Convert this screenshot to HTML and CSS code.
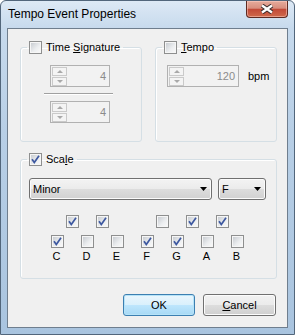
FILE: index.html
```html
<!DOCTYPE html>
<html lang="en">
<head>
    <meta charset="UTF-8">
    <meta name="viewport" content="width=device-width, initial-scale=1.0">
    <title>Tempo Event Properties</title>
    <link rel="stylesheet" href="styles.css">
</head>
<body>

<div class="window">
    <div class="titlebar">
        <span class="title">Tempo Event Properties</span>
        <span class="close">
            <svg width="14" height="10" viewBox="0 0 14 10">
                <path d="M2 1.5 L12 8.5 M12 1.5 L2 8.5" stroke="#3b2c2c" stroke-width="4.4" fill="none"/>
                <path d="M2 1.5 L12 8.5 M12 1.5 L2 8.5" stroke="#ffffff" stroke-width="2.4" fill="none"/>
            </svg>
        </span>
    </div>

    <div class="client">
        <div class="top-groups">
            <!-- Time signature -->
            <fieldset class="group">
                <legend><span class="chk"></span><span>Time <u>S</u>ignature</span></legend>
                <div class="sig">
                    <div class="spin">
                        <div class="spin-btns"><span class="up"></span><span class="down"></span></div>
                        <span class="spin-val">4</span>
                    </div>
                    <div class="divider"></div>
                    <div class="spin">
                        <div class="spin-btns"><span class="up"></span><span class="down"></span></div>
                        <span class="spin-val">4</span>
                    </div>
                </div>
            </fieldset>

            <!-- Tempo -->
            <fieldset class="group">
                <legend><span class="chk"></span><span><u>T</u>empo</span></legend>
                <div class="tempo">
                    <div class="spin spin-wide">
                        <div class="spin-btns"><span class="up"></span><span class="down"></span></div>
                        <span class="spin-val">120</span>
                    </div>
                    <span>bpm</span>
                </div>
            </fieldset>
        </div>

        <!-- Scale -->
        <fieldset class="group group-scale">
            <legend><span class="chk on"><svg width="9" height="9" viewBox="0 0 9 9"><path d="M1 4.3 L3.3 7.6 L8 0.8" stroke="#3d58a0" stroke-width="1.7" fill="none"/></svg></span><span>Sca<u>l</u>e</span></legend>
            <div class="scale-body">
                <div class="combos">
                    <div class="combo combo-mode"><span>Minor</span><svg width="7" height="4" viewBox="0 0 7 4"><path d="M0 0h7L3.5 4z" fill="#000"/></svg></div>
                    <div class="combo combo-key"><span>F</span><svg width="7" height="4" viewBox="0 0 7 4"><path d="M0 0h7L3.5 4z" fill="#000"/></svg></div>
                </div>
                <div class="keys">
                    <div class="key-row black-row" id="blackRow"></div>
                    <div class="key-row" id="whiteRow"></div>
                    <div class="key-row labels">
                        <span>C</span><span>D</span><span>E</span><span>F</span><span>G</span><span>A</span><span>B</span>
                    </div>
                </div>
            </div>
        </fieldset>

        <div class="buttons">
            <button class="btn btn-default">OK</button>
            <button class="btn"><u>C</u>ancel</button>
        </div>
    </div>
</div>

<script>
    // null = no black key between those white keys
    const blackKeys = [true, true, null, false, true, true, null];
    const whiteKeys = [true, false, false, true, true, false, false];
    const tick = '<svg width="9" height="9" viewBox="0 0 9 9"><path d="M1 4.3 L3.3 7.6 L8 0.8" stroke="#3d58a0" stroke-width="1.7" fill="none"/></svg>';

    function renderRow(id, keys) {
        const row = document.getElementById(id);
        keys.forEach(k => {
            const cell = document.createElement('span');
            cell.classList.add('cell');
            if (k !== null) {
                cell.innerHTML = `<span class="chk${k ? ' on' : ''}">${k ? tick : ''}</span>`;
            }
            row.appendChild(cell);
        });
    }

    renderRow('blackRow', blackKeys);
    renderRow('whiteRow', whiteKeys);
</script>

</body>
</html>
```

FILE: styles.css
```css
body {
    margin: 0;
    background: #ffffff;
    font-family: 'Liberation Sans', Arial, sans-serif;
    font-size: 11px;
    color: #000000;
}
.window {
    width: 295px;
    height: 335px;
    box-sizing: border-box;
    border: 1px solid #52667b;
    border-radius: 6px 6px 0 0;
    background: linear-gradient(180deg, #dde9f5 0, #c7daed 27px, #b8cfe6 130px, #a9c4df 100%);
    display: flex;
    flex-direction: column;
}
.titlebar {
    height: 27px;
    flex-shrink: 0;
    display: flex;
    align-items: flex-start;
    padding-left: 7px;
}
.title {
    font-size: 12px;
    line-height: 14px;
    padding-top: 6px;
}
.close {
    margin-left: auto;
    margin-right: 6px;
    width: 42px;
    height: 17px;
    box-sizing: border-box;
    border: 1px solid #5e2a22;
    border-top: none;
    border-radius: 0 0 4px 4px;
    background: linear-gradient(180deg, #e6ab9c 0%, #d88e7e 45%, #c24a38 52%, #cf6a4c 100%);
    box-shadow: inset 0 0 0 1px rgba(255, 210, 200, 0.5);
    display: flex;
    align-items: center;
    justify-content: center;
}
.client {
    flex: 1;
    margin: 0 6px 6px;
    border: 1px solid #6f7e8e;
    background: #f0f0f0;
    padding: 12px 10px 0 12px;
    display: flex;
    flex-direction: column;
}
.top-groups {
    display: grid;
    grid-template-columns: 122px 122px;
    column-gap: 13px;
}
.group {
    margin: 0;
    min-width: 0;
    height: 101px;
    box-sizing: border-box;
    padding: 0 6px;
    border: 1px solid #d5dfe5;
    border-radius: 3px;
    box-shadow: inset 1px 1px 0 #ffffff;
}
.group legend {
    display: flex;
    align-items: center;
    gap: 4px;
    height: 13px;
    line-height: 13px;
    padding: 0 3px 0 2px;
}
.group-scale {
    height: 126px;
    margin-top: 11px;
}

/* checkbox */
.chk {
    display: block;
    width: 13px;
    height: 13px;
    box-sizing: border-box;
    border: 1px solid #8e8f8f;
    padding: 1px;
    background: linear-gradient(135deg, #c9cdd2 0%, #eceef0 60%, #f8f8f8 100%) content-box, #f6f6f6;
}
.chk svg {
    display: block;
    overflow: visible;
}

/* spin boxes (disabled) */
.sig {
    display: flex;
    flex-direction: column;
    align-items: flex-start;
    padding: 11px 0 0 23px;
}
.spin {
    width: 60px;
    height: 22px;
    box-sizing: border-box;
    border: 1px solid #b1b1b1;
    background: #f2f2f2;
    padding: 1px 3px 0 1px;
    display: flex;
    align-items: flex-start;
}
.spin-wide {
    width: 72px;
}
.spin-btns {
    display: flex;
    flex-direction: column;
    gap: 1px;
}
.spin-btns span {
    width: 15px;
    height: 9px;
    box-sizing: border-box;
    border: 1px solid #cacaca;
    background: #f4f4f4;
    display: flex;
    align-items: center;
    justify-content: center;
}
.spin-btns .up::after,
.spin-btns .down::after {
    content: '';
    width: 0;
    height: 0;
    border-left: 3px solid transparent;
    border-right: 3px solid transparent;
}
.spin-btns .up::after {
    border-bottom: 3px solid #a9a9a9;
}
.spin-btns .down::after {
    border-top: 3px solid #a9a9a9;
}
.spin-val {
    margin-left: auto;
    color: #8b8b8b;
    line-height: 19px;
}
.divider {
    width: 69px;
    margin: 6px 0 6px -6px;
    border-top: 1px solid #a0a0a0;
    border-bottom: 1px solid #ffffff;
}
.tempo {
    display: flex;
    align-items: center;
    gap: 9px;
    padding: 11px 0 0 5px;
}

/* scale */
.scale-body {
    padding-top: 12px;
}
.combos {
    display: flex;
    gap: 6px;
    margin-left: 2px;
}
.combo {
    height: 22px;
    box-sizing: border-box;
    border: 1px solid #707070;
    border-radius: 3px;
    background: linear-gradient(180deg, #f3f3f3 0%, #ebebeb 50%, #dddddd 50%, #d1d1d1 100%);
    box-shadow: inset 0 0 0 1px #fbfbfb;
    display: flex;
    align-items: center;
    justify-content: space-between;
    padding: 0 4px 0 3px;
}
.combo-mode {
    width: 183px;
}
.combo-key {
    width: 48px;
}
.keys {
    margin: 15px 0 0 16px;
    display: flex;
    flex-direction: column;
    gap: 7px;
}
.key-row {
    display: grid;
    grid-template-columns: repeat(7, 30px);
    height: 13px;
}
.black-row {
    padding-left: 15px;
}
.cell .chk {
    margin-left: 8px;
}
.labels {
    margin-top: -5px;
    line-height: 13px;
}
.labels span {
    text-align: center;
    padding-right: 3px;
}

/* dialog buttons */
.buttons {
    display: flex;
    justify-content: flex-end;
    gap: 8px;
    margin: 15px 1px 0 0;
}
.btn {
    width: 73px;
    height: 22px;
    box-sizing: border-box;
    padding: 0;
    font: inherit;
    color: #000000;
    border: 1px solid #707070;
    border-radius: 3px;
    background: linear-gradient(180deg, #f2f2f2 0%, #ebebeb 50%, #dddddd 50%, #cfcfcf 100%);
    box-shadow: inset 0 0 0 1px #fcfcfc;
}
.btn-default {
    width: 72px;
    border-color: #3c7fb1;
    background: linear-gradient(180deg, #eaf6fd 0%, #d9f0fc 50%, #bee6fd 50%, #a7d9f5 100%);
    box-shadow: inset 0 0 0 1px #b6e3f8;
}
```
